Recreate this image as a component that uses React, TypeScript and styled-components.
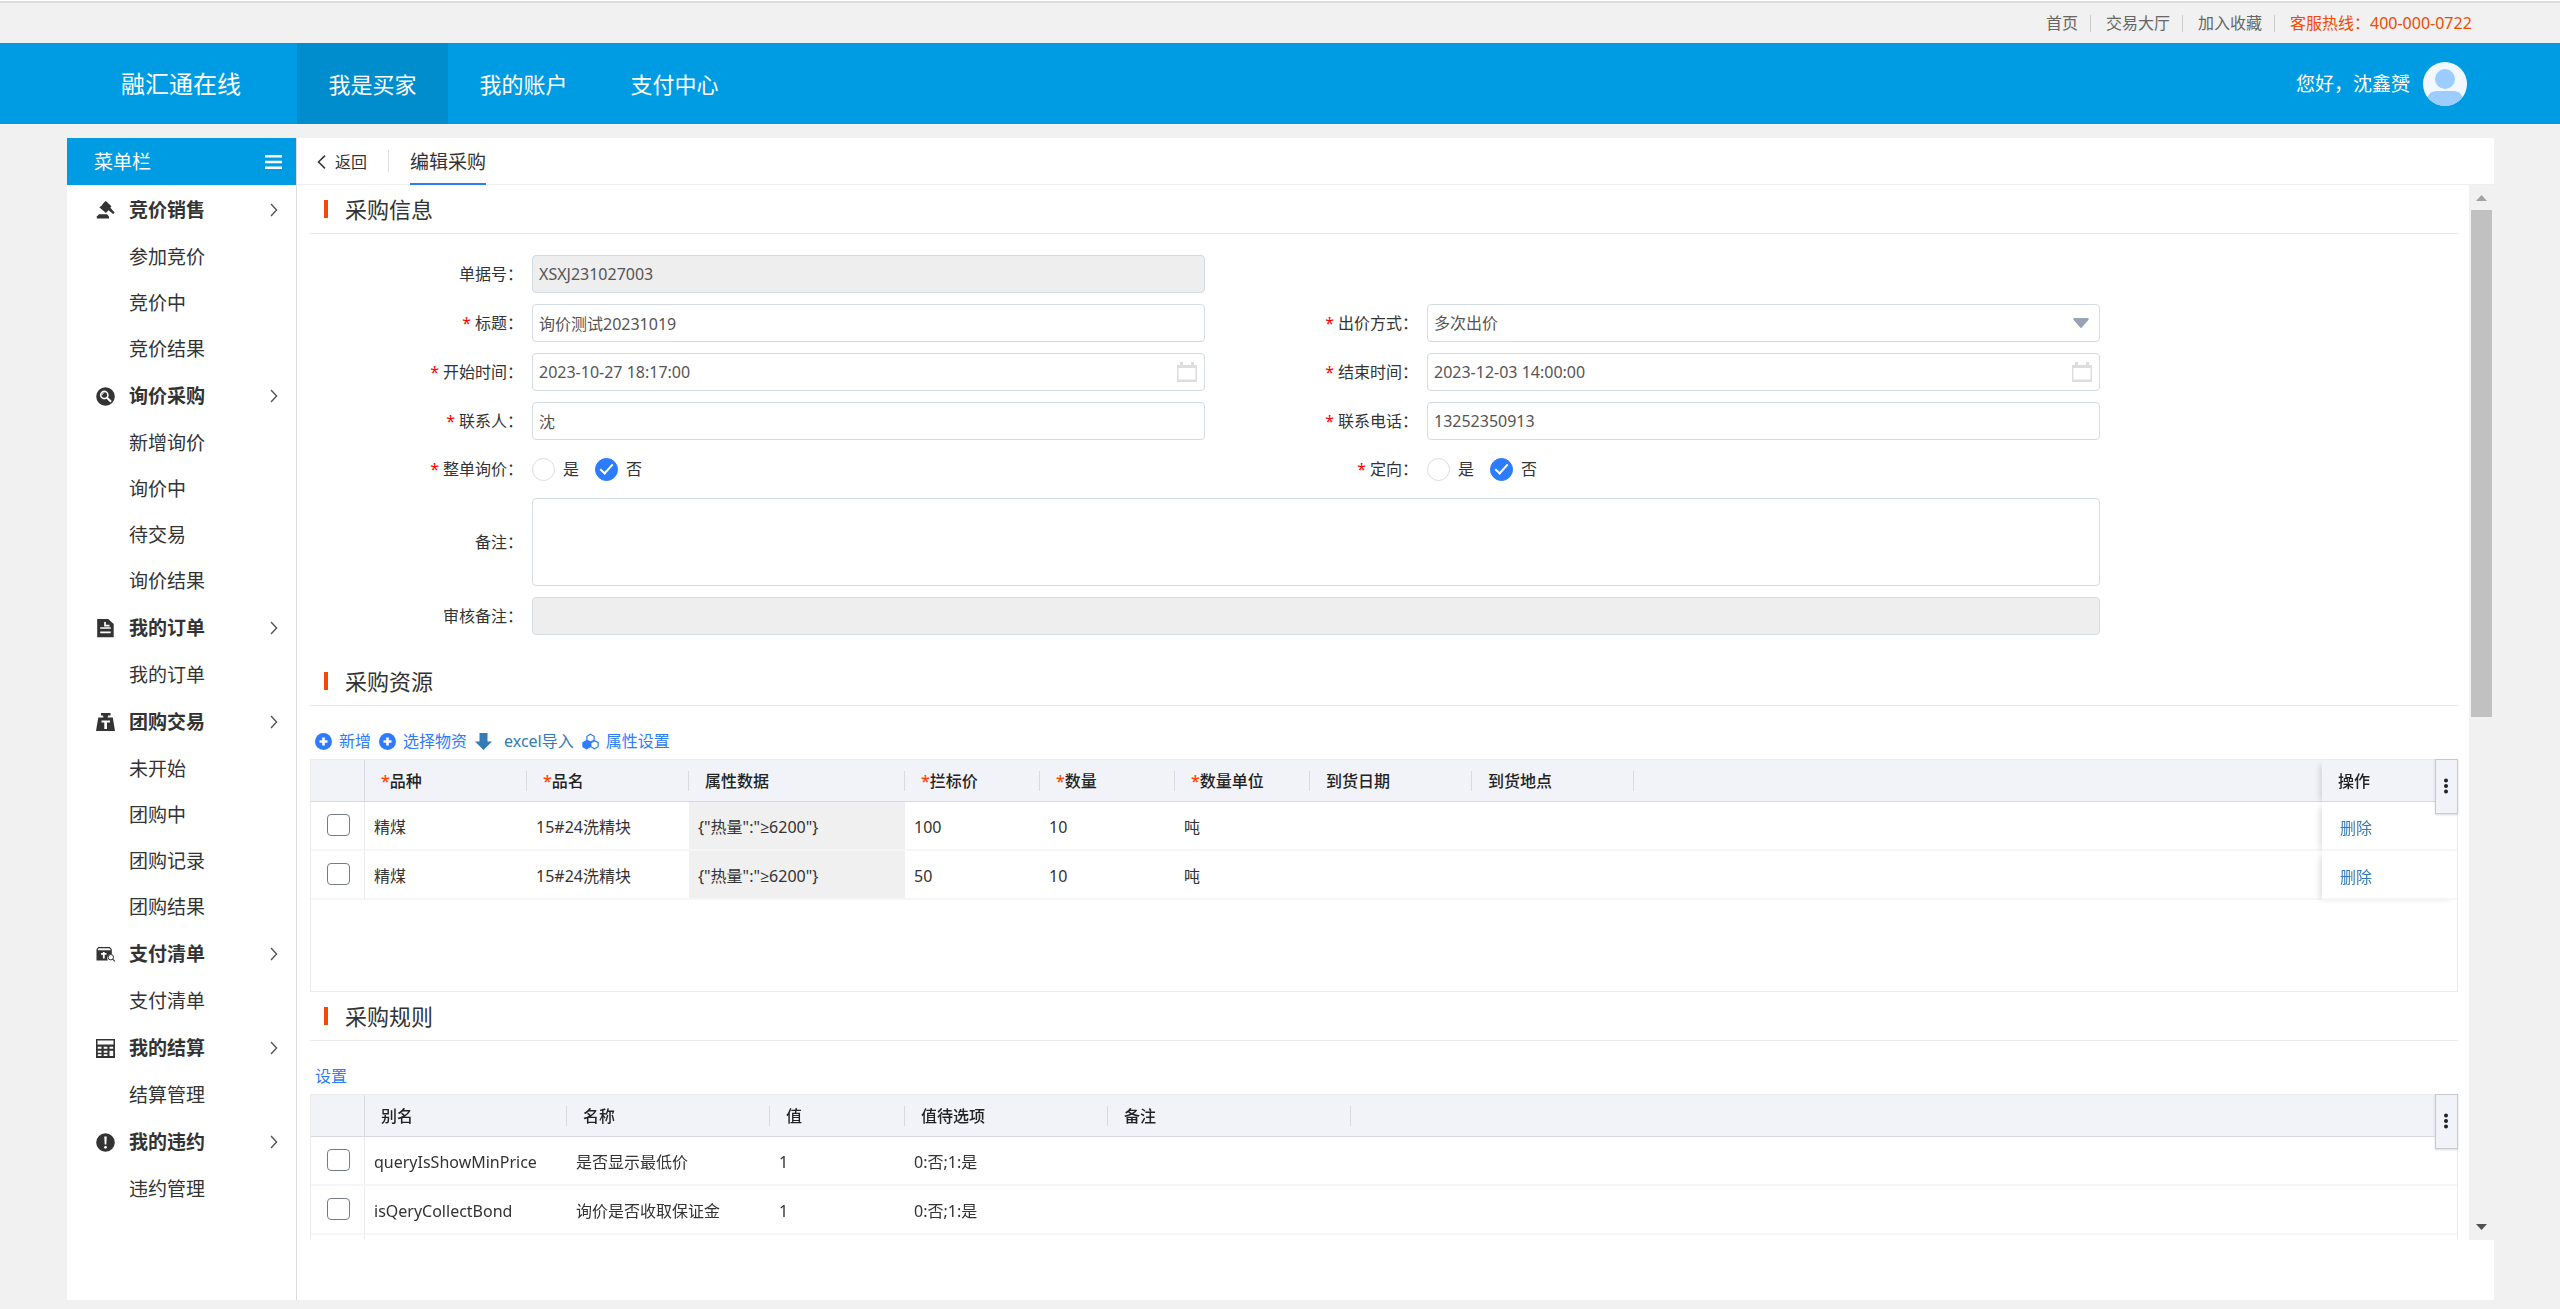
import React from "react";
import styled, { createGlobalStyle, css } from "styled-components";

const blue = "#009ce3";
const link = "#2b7cff";
const steel = "#337ab7";

const GlobalStyle = createGlobalStyle`
  *, *::before, *::after { box-sizing: border-box; }
  body {
    margin: 0;
    background: #f1f1f1;
    color: #333;
    font-family: "Noto Sans", "Open Sans", "Noto Sans CJK SC", sans-serif;
    font-size: 16px;
    line-height: 24px;
  }
  button, input, select, textarea { font: inherit; color: inherit; margin: 0; }
  button { border: 0; padding: 0; background: none; cursor: pointer; }
  a { color: inherit; text-decoration: none; }
  h2, ul { margin: 0; padding: 0; font-weight: 400; list-style: none; }
  svg { display: block; flex: none; }
`;

const Page = styled.div`
  display: flex;
  flex-direction: column;
  height: 100vh;
  padding-bottom: 9px;
`;

/* ---------- top strip ---------- */
const TopStrip = styled.div`
  display: flex;
  flex: none;
  justify-content: flex-end;
  align-items: center;
  height: 43px;
  padding: 2px 80px 0 0;
  border-top: 1px solid #fff;
  box-shadow: inset 0 2px #dbdddc;
  color: #666;
`;

const StripLink = styled.a`
  display: flex;
  align-items: center;
  &::after {
    content: "";
    width: 1px;
    height: 17px;
    margin: 0 15px 0 12px;
    background: #ccc;
  }
`;

const Hotline = styled.span`
  width: 190px;
  color: #f04b00;
  white-space: nowrap;
`;

/* ---------- blue header ---------- */
const Header = styled.header`
  display: flex;
  flex: none;
  align-items: center;
  height: 81px;
  padding-right: 93px;
  background: ${blue};
  color: #fff;
`;

const Brand = styled.div`
  width: 297px;
  padding-left: 121px;
  font-size: 24px;
  line-height: 36px;
`;

const Nav = styled.nav`
  display: flex;
  flex: 1;
  align-self: stretch;
`;

const NavItem = styled.a<{ $active?: boolean }>`
  display: flex;
  align-items: center;
  justify-content: center;
  width: 151px;
  font-size: 22px;
  background: ${(p) => (p.$active ? "#008dcd" : "transparent")};
`;

const User = styled.div`
  display: flex;
  align-items: center;
  gap: 13px;
  font-size: 19px;
`;

/* ---------- body ---------- */
const Body = styled.div`
  display: flex;
  flex: 1;
  min-height: 0;
  margin: 14px 66px 0 67px;
  background: #fff;
`;

const Sidebar = styled.aside`
  flex: none;
  width: 230px;
  border-right: 1px solid #ddd;
`;

const SidebarHead = styled.div`
  display: flex;
  align-items: center;
  justify-content: space-between;
  height: 47px;
  margin-bottom: 1px;
  padding: 0 14px 0 27px;
  background: ${blue};
  color: #fff;
  font-size: 19px;
`;

const GroupHead = styled.button`
  display: flex;
  align-items: center;
  width: 100%;
  height: 48px;
  padding: 0 18px 0 29px;
  font-size: 19px;
  font-weight: 700;
  text-align: left;
  span { flex: 1; padding-left: 14px; }
`;

const SubItem = styled.a`
  display: flex;
  align-items: center;
  height: 46px;
  padding-left: 62px;
  font-size: 19px;
`;

const Content = styled.main`
  display: flex;
  flex: 1;
  flex-direction: column;
  min-width: 0;
  padding-bottom: 60px;
`;

const TabBar = styled.div`
  display: flex;
  flex: none;
  align-items: center;
  height: 47px;
  padding-left: 20px;
  border-bottom: 1px solid #eee;
`;

const Back = styled.button`
  display: flex;
  align-items: center;
  gap: 9px;
  padding-top: 2px;
`;

const Divider = styled.i`
  width: 1px;
  height: 22px;
  margin: 0 21px;
  background: #ddd;
`;

const Tab = styled.a`
  display: flex;
  align-items: center;
  height: 47px;
  margin-bottom: -1px;
  padding-top: 2px;
  border-bottom: 2px solid ${link};
  font-size: 19px;
`;

const Scroller = styled.div`
  display: flex;
  flex: 1;
  min-height: 0;
`;

const Pane = styled.div`
  flex: 1;
  min-width: 0;
  overflow: hidden;
  padding: 0 11px 0 13px;
`;

const Track = styled.div`
  display: flex;
  flex: none;
  flex-direction: column;
  width: 25px;
  padding: 10px 2px;
  background: #f1f1f1;
  align-items: center;
`;

const Thumb = styled.div`
  width: 100%;
  height: 49%;
  margin: 9px 0 auto;
  background: #c1c1c1;
`;

/* ---------- sections ---------- */
const SectionTitle = styled.h2`
  display: flex;
  align-items: center;
  gap: 17px;
  height: 49px;
  padding-left: 14px;
  border-bottom: 1px solid #eaeaea;
  font-size: 22px;
  &::before {
    content: "";
    width: 4px;
    height: 18px;
    background: #f04b00;
  }
`;

const Form = styled.form`
  display: grid;
  grid-template-columns: 5fr 5fr 2fr;
  row-gap: 11px;
  padding: 21px 0 22px;
`;

const Field = styled.div<{ $wide?: boolean; $start?: boolean; $height?: number }>`
  display: flex;
  align-items: center;
  height: ${(p) => p.$height ?? 38}px;
  grid-column: ${(p) => (p.$wide ? "1 / span 2" : p.$start ? "1" : "2")};
`;

const FieldLabel = styled.label`
  flex: none;
  width: 222px;
  padding-right: 9px;
  text-align: right;
`;

const Star = styled.span`
  color: #f00;
  margin-right: 4px;
`;

const control = css`
  display: block;
  flex: 1;
  min-width: 0;
  width: 100%;
  height: 100%;
  padding: 0 6px;
  border: 1px solid #d5dbe3;
  border-radius: 4px;
  outline: 0;
  background: #fff;
  color: #555;
  &:disabled { background: #eee; opacity: 1; }
`;

const Input = styled.input`${control}`;
const Select = styled.select`${control} appearance: none;`;
const TextArea = styled.textarea`${control} resize: none;`;

const WithIcon = styled.div<{ $inset: number }>`
  position: relative;
  flex: 1;
  height: 100%;
  svg {
    position: absolute;
    top: 0;
    bottom: 0;
    right: ${(p) => p.$inset}px;
    margin: auto 0;
    pointer-events: none;
  }
`;

const RadioLabel = styled.label`
  display: flex;
  align-items: center;
  gap: 8px;
  margin-right: 16px;
`;

const Radio = styled.input`
  position: relative;
  appearance: none;
  width: 23px;
  height: 23px;
  border: 1px solid #ddd;
  border-radius: 50%;
  background: #fff;
  &:checked { border-color: ${link}; background: ${link}; }
  &:checked::after {
    content: "";
    position: absolute;
    left: 7px;
    top: 2px;
    width: 7px;
    height: 13px;
    border: solid #fff;
    border-width: 0 2px 2px 0;
    transform: rotate(42deg);
  }
`;

const Toolbar = styled.div`
  display: flex;
  align-items: center;
  gap: 8px;
  height: 53px;
  padding: 17px 0 0 5px;
`;

const ToolButton = styled.button<{ $muted?: boolean }>`
  display: flex;
  align-items: center;
  gap: ${(p) => (p.$muted ? 12 : 7)}px;
  color: ${(p) => (p.$muted ? steel : link)};
`;

/* ---------- grid ---------- */
const GridBox = styled.div`
  position: relative;
  height: 233px;
  border: 1px solid #ebebee;
`;

const Grid = styled.table`
  width: 100%;
  table-layout: fixed;
  border-collapse: separate;
  border-spacing: 0;
`;

const Th = styled.th<{ $sep?: boolean }>`
  height: 42px;
  padding: 0 16px;
  border-bottom: 1px solid #d8dae2;
  background: #f2f3f9
    ${(p) => (p.$sep ? "linear-gradient(#d9dae0, #d9dae0) right center / 1px 20px no-repeat" : "")};
  font-weight: 500;
  text-align: left;
  white-space: nowrap;
  color: #222;
`;

const CheckTh = styled(Th)`
  border-right: 1px solid #dadbe0;
`;

const HeadStar = styled.span`
  color: #ff4400;
`;

const Td = styled.td<{ $locked?: boolean }>`
  height: 49px;
  padding: 3px 0 0 9px;
  border-bottom: 2px solid #f6f6fa;
  background: ${(p) => (p.$locked ? "#f0f0f0" : "transparent")};
  white-space: nowrap;
`;

const CheckTd = styled(Td)`
  padding: 0 0 0 16px;
  border-right: 1px solid #ebebee;
`;

const Check = styled.input`
  display: block;
  appearance: none;
  width: 23px;
  height: 22px;
  margin-bottom: 2px;
  border: 1px solid #767c84;
  border-radius: 4px;
  background: #fff;
`;

const pinned = css`
  position: sticky;
  right: 0;
  box-shadow: -5px 2px 6px -3px rgba(0, 0, 0, 0.14);
`;
const PinnedTh = styled(Th)`${pinned}`;
const PinnedTd = styled(Td)`
  ${pinned}
  padding: 5px 0 0 18px;
  background: #fff;
  color: ${steel};
`;

const ColumnMenu = styled.button`
  position: absolute;
  top: -1px;
  right: -1px;
  display: flex;
  align-items: center;
  justify-content: center;
  width: 23px;
  height: 55px;
  padding: 0 2px 2px 0;
  border: 1px solid #c9cacf;
  background: #f2f3f9;
  box-shadow: 0 1px 2px rgba(0, 0, 0, 0.15);
`;

/* ---------- icons ---------- */
const Chevron = () => (
  <svg width="8" height="14" viewBox="0 0 8 14" fill="none" stroke="#555" strokeWidth="1.4">
    <path d="M1 1l5.6 6L1 13" />
  </svg>
);

const Burger = () => (
  <svg width="17" height="14" viewBox="0 0 17 14" fill="#fff">
    <path d="M0 0h17v2.500H0zM0 5.800h17v2.400H0zM0 11.500h17V14H0z" />
  </svg>
);

const BackArrow = () => (
  <svg width="9" height="14" viewBox="0 0 9 14" fill="none" stroke="#333" strokeWidth="1.5">
    <path d="M8 .6L1.500 7 8 13.400" />
  </svg>
);

const Avatar = () => (
  <svg width="44" height="44" viewBox="0 0 44 44">
    <clipPath id="face"><circle cx="22" cy="22" r="22" /></clipPath>
    <g clipPath="url(#face)">
      <rect width="44" height="44" fill="#f2f8ff" />
      <circle cx="22" cy="17" r="10" fill="#9dccff" />
      <path d="M3 44c0-9 3-15 11-15h16c8 0 11 6 11 15z" fill="#9dccff" />
    </g>
  </svg>
);

const Calendar = () => (
  <svg width="20" height="20" viewBox="0 0 20 20" fill="#ddd">
    <path d="M3 0h3v3h8V0h3v3h3v17H0V3h3zM1.500 6v11.500h17V6z" fillRule="evenodd" />
  </svg>
);

const Caret = () => (
  <svg width="16" height="10" viewBox="0 0 16 10" fill="#98a4b3">
    <path d="M1.500 0h13c1.200 0 1.600 1 .9 1.900L9 9.300c-.6.800-1.400.8-2 0L.6 1.900C-.1 1 .3 0 1.500 0z" />
  </svg>
);

const PlusCircle = () => (
  <svg width="17" height="17" viewBox="0 0 17 17">
    <circle cx="8.500" cy="8.500" r="8.500" fill={link} />
    <path d="M7.200 4.500h2.600v2.700h2.700v2.600H9.800v2.700H7.200V9.800H4.500V7.200h2.700z" fill="#fff" />
  </svg>
);

const DownArrow = () => (
  <svg width="17" height="17" viewBox="0 0 17 17" fill={steel}>
    <path d="M4.500 0h8v8.500H17L8.500 17 0 8.500h4.500z" />
  </svg>
);

const Honeycomb = () => (
  <svg width="17" height="17" viewBox="0 0 18 17" fill="none" stroke={link} strokeWidth="1.300">
    <path d="M9 .8l3.800 2.200v4.200L9 9 5.200 7.200V3z" />
    <path d="M13.200 7.600l3.900 2.200v4.200l-3.900 2.200-3.800-2.200V9.800z" />
    <path d="M4.800 7.600l3.900 2.200v4.200l-3.900 2.200L1 14V9.800z" fill={link} />
  </svg>
);

const Dots = () => (
  <svg width="4" height="16" viewBox="0 0 4 16" fill="#222">
    <circle cx="2" cy="2.500" r="2" /><circle cx="2" cy="8" r="2" /><circle cx="2" cy="13.500" r="2" />
  </svg>
);

const ScrollArrow = ({ down }: { down?: boolean }) => (
  <svg width="11" height="6" viewBox="0 0 11 6" fill={down ? "#505050" : "#a3a3a3"}>
    <path d={down ? "M0 0h11L5.500 6z" : "M0 6h11L5.500 0z"} />
  </svg>
);

const groupIcons: Record<string, React.ReactNode> = {
  gavel: (
    <>
      <path d="M8.200 1.200L9.800 0l5.600 5.200-1 1.600 4.200 4.800-1.500 1.500-4.600-3.800-2.600 2.600L3.300 6.200l2-1.200z" />
      <path d="M3 13.200h8l2 2.300v2H.8v-2z" />
    </>
  ),
  search: (
    <>
      <circle cx="9.500" cy="9.500" r="9.300" />
      <g fill="none" stroke="#fff">
        <circle cx="8.300" cy="8" r="3.600" strokeWidth="1.600" />
        <path d="M11 10.800l4 4" strokeWidth="2.200" />
      </g>
      <path d="M6.200 8a2.200 2.200 0 0 1 2-2.200" stroke="#fff" strokeWidth=".8" fill="none" />
    </>
  ),
  file: (
    <>
      <path d="M1.200 0h11l5.500 5v13.200H1.200z" />
      <path d="M4.200 9h10.500M4.200 13.300h10.500M9 3v3.600h4.500" stroke="#fff" strokeWidth="1.700" fill="none" />
    </>
  ),
  weight: (
    <>
      <path d="M5 0h9.500v2.600h-2.300l-.6 1.800h5.200L19 18H0L2.300 4.400h5.200l-.6-1.800H5z" />
      <path d="M5.500 7.400h8.500v2.200h-3v6.300H8.300V9.600H5.500z" fill="#fff" />
    </>
  ),
  wallet: (
    <>
      <path d="M2.300 2h11.500l2 2.300v5a4 4 0 0 0-4 6.200H.5V4.300zM1.800 5.200h12.800v-.6L13.200 3.200H2.800L1.800 4.400z" fillRule="evenodd" />
      <path d="M5 8.800h5.500M7.800 7v6.500" stroke="#fff" strokeWidth="1.800" />
      <circle cx="14.800" cy="12.200" r="2.700" fill="#fff" stroke="#333" strokeWidth="1" />
      <path d="M16.700 14.200l2.200 2.200" stroke="#333" strokeWidth="1.200" />
    </>
  ),
  calc: (
    <>
      <path d="M0 0h19v19H0z" />
      <path d="M1.500 1.500h16v4h-16zM1.800 7.800h3.700v2H1.800zM7.700 7.800h3.700v2H7.700zM13.500 7.800h3.700v2h-3.700zM1.800 11.700h3.700v2H1.800zM7.700 11.700h3.700v2H7.700zM13.500 11.700h3.700v5.400h-3.700zM1.800 15.300h3.700v1.800H1.800zM7.700 15.300h3.700v1.800H7.700z" fill="#fff" />
    </>
  ),
  alert: (
    <>
      <circle cx="9.500" cy="9.500" r="9.300" />
      <path d="M8.300 3.500h2.400l-.4 8H8.700z" fill="#fff" />
      <circle cx="9.500" cy="14.300" r="1.400" fill="#fff" />
    </>
  ),
};

const GroupIcon = ({ name }: { name: string }) => (
  <svg width="19" height="19" viewBox="0 0 19 19" fill="#333">{groupIcons[name]}</svg>
);

/* ---------- data ---------- */
const groups = [
  { title: "竞价销售", icon: "gavel", items: ["参加竞价", "竞价中", "竞价结果"] },
  { title: "询价采购", icon: "search", items: ["新增询价", "询价中", "待交易", "询价结果"] },
  { title: "我的订单", icon: "file", items: ["我的订单"] },
  { title: "团购交易", icon: "weight", items: ["未开始", "团购中", "团购记录", "团购结果"] },
  { title: "支付清单", icon: "wallet", items: ["支付清单"] },
  { title: "我的结算", icon: "calc", items: ["结算管理"] },
  { title: "我的违约", icon: "alert", items: ["违约管理"] },
];

type Column = { name: string; width: number; required?: boolean; locked?: boolean };

const resourceColumns: Column[] = [
  { name: "品种", width: 162, required: true },
  { name: "品名", width: 162, required: true },
  { name: "属性数据", width: 216, locked: true },
  { name: "拦标价", width: 135, required: true },
  { name: "数量", width: 135, required: true },
  { name: "数量单位", width: 135, required: true },
  { name: "到货日期", width: 162 },
  { name: "到货地点", width: 162 },
];
const resourceRows = [
  ["精煤", "15#24洗精块", '{"热量":"≥6200"}', "100", "10", "吨", "", ""],
  ["精煤", "15#24洗精块", '{"热量":"≥6200"}', "50", "10", "吨", "", ""],
];

const ruleColumns: Column[] = [
  { name: "别名", width: 202 },
  { name: "名称", width: 203 },
  { name: "值", width: 135 },
  { name: "值待选项", width: 203 },
  { name: "备注", width: 243 },
];
const ruleRows = [
  ["queryIsShowMinPrice", "是否显示最低价", "1", "0:否;1:是", ""],
  ["isQeryCollectBond", "询价是否收取保证金", "1", "0:否;1:是", ""],
  ["", "", "", "", ""],
];

/* ---------- composed parts ---------- */
function DataGrid({ columns, rows, removable }: { columns: Column[]; rows: string[][]; removable?: boolean }) {
  return (
    <GridBox>
      <Grid>
        <colgroup>
          <col width={54} />
          {columns.map((c) => <col key={c.name} width={c.width} />)}
          <col />
          {removable && <col width={135} />}
        </colgroup>
        <thead>
          <tr>
            <CheckTh />
            {columns.map((c) => (
              <Th key={c.name} $sep>{c.required && <HeadStar>*</HeadStar>}{c.name}</Th>
            ))}
            <Th />
            {removable && <PinnedTh>操作</PinnedTh>}
          </tr>
        </thead>
        <tbody>
          {rows.map((row, i) => (
            <tr key={i}>
              <CheckTd><Check type="checkbox" aria-label={`选择第${i + 1}行`} /></CheckTd>
              {row.map((cell, j) => <Td key={j} $locked={columns[j].locked}>{cell}</Td>)}
              <Td />
              {removable && <PinnedTd><a href="#remove">删除</a></PinnedTd>}
            </tr>
          ))}
        </tbody>
      </Grid>
      <ColumnMenu type="button" aria-label="列设置"><Dots /></ColumnMenu>
    </GridBox>
  );
}

function Caption({ id, text, required }: { id?: string; text: string; required?: boolean }) {
  return (
    <FieldLabel htmlFor={id} as={id ? "label" : "span"}>
      {required && <Star>*</Star>}{text}：
    </FieldLabel>
  );
}

function YesNo({ name }: { name: string }) {
  return (
    <>
      <RadioLabel><Radio type="radio" name={name} />是</RadioLabel>
      <RadioLabel><Radio type="radio" name={name} defaultChecked />否</RadioLabel>
    </>
  );
}

export default function App() {
  return (
    <Page>
      <GlobalStyle />
      <TopStrip>
        <StripLink href="#home">首页</StripLink>
        <StripLink href="#hall">交易大厅</StripLink>
        <StripLink href="#favorite">加入收藏</StripLink>
        <Hotline>客服热线：400-000-0722</Hotline>
      </TopStrip>
      <Header>
        <Brand>融汇通在线</Brand>
        <Nav>
          <NavItem href="#buyer" $active>我是买家</NavItem>
          <NavItem href="#account">我的账户</NavItem>
          <NavItem href="#pay">支付中心</NavItem>
        </Nav>
        <User>您好，沈鑫赟<Avatar /></User>
      </Header>
      <Body>
        <Sidebar>
          <SidebarHead>菜单栏<Burger /></SidebarHead>
          {groups.map((g) => (
            <div key={g.title}>
              <GroupHead type="button"><GroupIcon name={g.icon} /><span>{g.title}</span><Chevron /></GroupHead>
              {g.items.map((item) => <SubItem key={item} href="#menu">{item}</SubItem>)}
            </div>
          ))}
        </Sidebar>
        <Content>
          <TabBar>
            <Back type="button"><BackArrow />返回</Back>
            <Divider />
            <Tab href="#edit">编辑采购</Tab>
          </TabBar>
          <Scroller>
            <Pane>
              <SectionTitle>采购信息</SectionTitle>
              <Form>
                <Field $start>
                  <Caption id="no" text="单据号" />
                  <Input id="no" defaultValue="XSXJ231027003" disabled />
                </Field>
                <Field $start>
                  <Caption id="title" text="标题" required />
                  <Input id="title" defaultValue="询价测试20231019" />
                </Field>
                <Field>
                  <Caption id="mode" text="出价方式" required />
                  <WithIcon $inset={11}>
                    <Select id="mode"><option>多次出价</option></Select>
                    <Caret />
                  </WithIcon>
                </Field>
                <Field $start>
                  <Caption id="start" text="开始时间" required />
                  <WithIcon $inset={8}>
                    <Input id="start" defaultValue="2023-10-27 18:17:00" />
                    <Calendar />
                  </WithIcon>
                </Field>
                <Field>
                  <Caption id="end" text="结束时间" required />
                  <WithIcon $inset={8}>
                    <Input id="end" defaultValue="2023-12-03 14:00:00" />
                    <Calendar />
                  </WithIcon>
                </Field>
                <Field $start>
                  <Caption id="contact" text="联系人" required />
                  <Input id="contact" defaultValue="沈" />
                </Field>
                <Field>
                  <Caption id="phone" text="联系电话" required />
                  <Input id="phone" defaultValue="13252350913" />
                </Field>
                <Field $start $height={36}>
                  <Caption text="整单询价" required />
                  <YesNo name="whole" />
                </Field>
                <Field $height={36}>
                  <Caption text="定向" required />
                  <YesNo name="directed" />
                </Field>
                <Field $wide $height={88}>
                  <Caption id="note" text="备注" />
                  <TextArea id="note" />
                </Field>
                <Field $wide>
                  <Caption id="audit" text="审核备注" />
                  <Input id="audit" disabled />
                </Field>
              </Form>

              <SectionTitle>采购资源</SectionTitle>
              <Toolbar>
                <ToolButton type="button"><PlusCircle />新增</ToolButton>
                <ToolButton type="button"><PlusCircle />选择物资</ToolButton>
                <ToolButton type="button" $muted><DownArrow />excel导入</ToolButton>
                <ToolButton type="button"><Honeycomb />属性设置</ToolButton>
              </Toolbar>
              <DataGrid columns={resourceColumns} rows={resourceRows} removable />

              <SectionTitle>采购规则</SectionTitle>
              <Toolbar>
                <ToolButton type="button">设置</ToolButton>
              </Toolbar>
              <DataGrid columns={ruleColumns} rows={ruleRows} />
            </Pane>
            <Track>
              <ScrollArrow />
              <Thumb />
              <ScrollArrow down />
            </Track>
          </Scroller>
        </Content>
      </Body>
    </Page>
  );
}
